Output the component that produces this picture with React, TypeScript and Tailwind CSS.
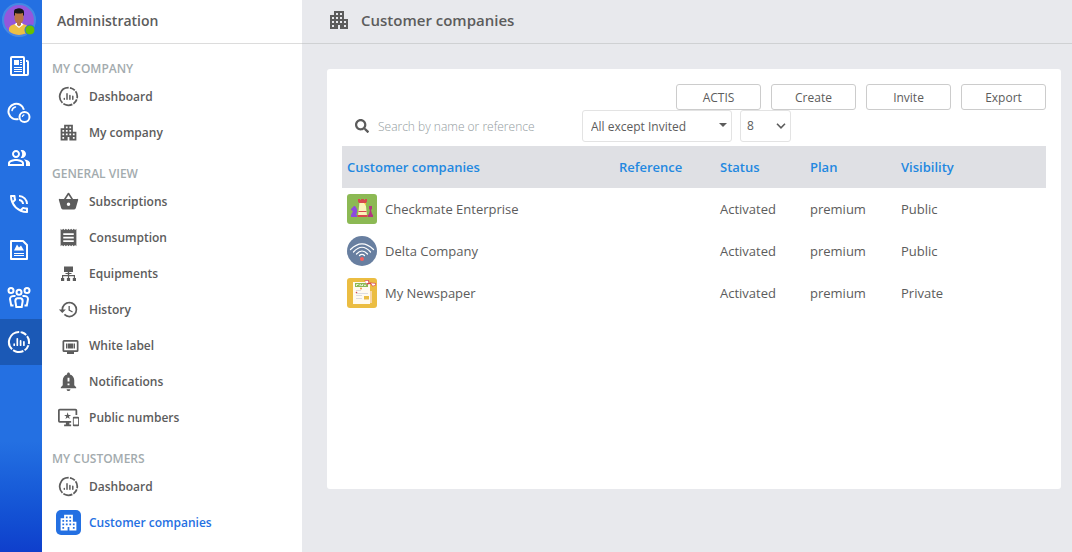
import type { ReactNode } from "react";
import {
  MdHistory,
  MdImportantDevices,
  MdNotificationImportant,
  MdOutlinePeopleAlt,
  MdOutlinePhoneInTalk,
} from "react-icons/md";
import { FaSearch } from "react-icons/fa";

type IconProps = { className?: string };

type NavEntry = { label: string; icon: ReactNode; active?: boolean };
type NavSection = { title: string; entries: NavEntry[] };

type Company = {
  name: string;
  logo: ReactNode;
  reference: string;
  status: string;
  plan: string;
  visibility: string;
};

function StatsIcon({ className }: IconProps) {
  return (
    <svg viewBox="0 0 24 24" fill="none" stroke="currentColor" className={className}>
      <circle
        cx="12"
        cy="12"
        r="10"
        strokeWidth="2"
        pathLength="360"
        strokeDasharray="37 8 62 8 137 8 37 8 47 8"
        transform="rotate(19 12 12)"
      />
      <path
        strokeWidth="1.7"
        strokeLinecap="round"
        d="M7.200 15.200v-1M10.300 15.200V8.800M13.600 15.200v-4.400M16.900 15.200v-3.400"
      />
    </svg>
  );
}

function BuildingIcon({ className }: IconProps) {
  return (
    <svg viewBox="0 0 24 24" fill="currentColor" className={className}>
      <path
        fillRule="evenodd"
        d="M3 7h4V3h10v8h4v10h-8v-4h-2v4H3zM5 9v2h2V9zM5 13v2h2v-2zM5 17v2h2v-2zM9 5v2h2V5zM13 5v2h2V5zM9 9v2h2V9zM13 9v2h2V9zM9 13v2h2v-2zM13 13v2h2v-2zM17 13v2h2v-2zM17 17v2h2v-2z"
      />
    </svg>
  );
}

function BasketIcon({ className }: IconProps) {
  return (
    <svg viewBox="0 0 24 24" fill="currentColor" className={className}>
      <path
        fillRule="evenodd"
        d="M17.200 9l-4.400-6.600a1 1 0 0 0-1.600 0L6.800 9H2a1 1 0 0 0-1 1.300l2.600 9.200A2 2 0 0 0 5.500 21h13a2 2 0 0 0 1.900-1.500L23 10.300A1 1 0 0 0 22 9zM9 9l3-4.400L15 9zM12 17a2 2 0 1 1 0-4 2 2 0 0 1 0 4z"
      />
    </svg>
  );
}

function ReceiptIcon({ className }: IconProps) {
  return (
    <svg viewBox="0 0 24 24" fill="currentColor" className={className}>
      <path
        fillRule="evenodd"
        d="M3 2l1.500 1.500L6 2l1.500 1.500L9 2l1.500 1.500L12 2l1.500 1.500L15 2l1.500 1.500L18 2l1.500 1.500L21 2v20l-1.500-1.500L18 22l-1.500-1.500L15 22l-1.500-1.500L12 22l-1.500-1.500L9 22l-1.500-1.500L6 22l-1.500-1.500L3 22zM6 7v2h12V7zM6 11v2h12v-2zM6 15v2h12v-2z"
      />
    </svg>
  );
}

function NewsIcon({ className }: IconProps) {
  return (
    <svg viewBox="0 0 20 20" fill="none" stroke="currentColor" className={className}>
      <rect x="2" y="1" width="13" height="18" rx="1" strokeWidth="2" />
      <path strokeWidth="2" d="M15 5h3a1 1 0 0 1 1 1v12a1 1 0 0 1-1 1h-4" />
      <path stroke="#2470e2" d="M16.500 4v14" />
      <path fill="currentColor" stroke="none" d="M5 4h5v5H5z" />
      <path d="M11 4.500h2M11 6.500h2M11 8.500h2M5 11.500h8M5 13.500h8M5 15.500h8" />
    </svg>
  );
}

function BubblesIcon({ className }: IconProps) {
  return (
    <svg viewBox="0 0 24 24" fill="none" stroke="currentColor" strokeWidth="2" className={className}>
      <path d="M16.900 9.800A7.800 7.800 0 1 0 11.500 19" />
      <path strokeWidth="1.5" strokeLinecap="round" d="M5 10.500a4.500 4.500 0 0 1 3.500-3.500" />
      <circle cx="17.500" cy="17" r="5" />
      <path strokeWidth="1.2" strokeLinecap="round" d="M15.400 16.500a2.300 2.300 0 0 1 1.600-1.600" />
    </svg>
  );
}

function PictureDocIcon({ className }: IconProps) {
  return (
    <svg viewBox="0 0 20 20" fill="none" stroke="currentColor" className={className}>
      <path strokeWidth="2" strokeLinejoin="round" d="M2 1h12l4 4v14H2z" />
      <path fill="currentColor" stroke="none" d="M5 10.500l3-6 2 3 2-2 3 5z" />
      <path d="M5 13.500h10M5 15.500h10" />
    </svg>
  );
}

function CrowdIcon({ className }: IconProps) {
  return (
    <svg viewBox="0 0 24 24" fill="none" stroke="currentColor" strokeWidth="2" className={className}>
      <circle cx="4" cy="6.500" r="2.500" />
      <circle cx="20" cy="6.500" r="2.500" />
      <circle cx="12" cy="8.300" r="2.500" />
      <path d="M12 14c-2.500 0-3.700 1-3.700 3l1 6h5.400l1-6c0-2-1.200-3-3.700-3z" />
      <path d="M8.500 12C4.800 11.500 3 12.800 3 15l1.200 6.500H6.500M15.500 12c3.700-.5 5.500.8 5.500 3l-1.200 6.500h-2.300" />
    </svg>
  );
}

function NetworkIcon({ className }: IconProps) {
  return (
    <svg viewBox="0 0 21 21" fill="currentColor" className={className}>
      <path d="M6 3.500h9V9H6zM9.800 9h1.400v3H9.800zM7.500 10h6v1h-6zM4 12h13v1.200H4zM4 12h1.200v3H4zM9.900 12h1.200v3H9.900zM15.800 12H17v3h-1.200z" />
      <path d="M3 15h3.200v3H3zM8.900 15h3.200v3H8.900zM14.800 15H18v3h-3.200z" />
    </svg>
  );
}

function ScreenIcon({ className }: IconProps) {
  return (
    <svg viewBox="0 0 21 21" fill="currentColor" className={className}>
      <path
        fillRule="evenodd"
        d="M6 5h13a1.500 1.500 0 0 1 1.500 1.500v9A1.500 1.500 0 0 1 19 17h-3v2H9v-2H6a1.500 1.500 0 0 1-1.500-1.500v-9A1.500 1.500 0 0 1 6 5zM6.200 6.700v8.600h12.600V6.700z"
      />
      <path d="M8 8.500h1v5H8zM9.500 8.500h6v5h-6zM16 8.500h1v5h-1z" />
    </svg>
  );
}

function Avatar() {
  return (
    <svg viewBox="0 0 34 34" className="size-[34px]" role="img" aria-label="Profile">
      <defs>
        <clipPath id="face">
          <circle cx="17" cy="17" r="15" />
        </clipPath>
      </defs>
      <circle cx="17" cy="17" r="16" fill="#9457dc" stroke="#4689e3" strokeWidth="2" />
      <g clipPath="url(#face)">
        <path fill="#ecc044" d="M7 34V25q1-3 6-4h8q5 1 6 4v9z" />
        <path fill="#fff" d="M12.500 21.500l4.500 3.500 4.500-3.500-1.500-1.500h-6z" />
        <path fill="#b87543" d="M12.500 8h9v8q-.5 3-2.500 4v2L17 23.500 15 22v-2q-2-1-2.500-4z" />
        <path fill="#161616" d="M12 12.500V9q0-3 2-3 3-1.500 6 0 2 1 2 3v3.500h-1V10q-4 1-8 0v2.500z" />
      </g>
      <circle cx="28" cy="27" r="5" fill="#68c000" stroke="#2470e2" strokeWidth="1" />
    </svg>
  );
}

function ChessLogo() {
  return (
    <svg viewBox="0 0 30 30" className="size-[30px]">
      <rect width="30" height="30" rx="3" fill="#8cb954" />
      <path fill="#fbf3bb" d="M12.500 8h6l1.500 13.500h-9z" />
      <path fill="#d8484d" d="M11 5h2v1h1V5h3v1h1V5h2v2.500l-1 1.500h-7l-1-1.500zM11.500 17h8v1h-8zM10.500 21h10v2h-10z" />
      <path fill="#f6c73c" d="M17 9h2v3z" />
      <path fill="#8d4ade" d="M4 15l3-3h1l2 3v3l-1 3h1v2H4v-2l2-4-2-1z" />
      <path fill="#b33482" d="M22 12h3v3l-1 1 1 4 1 1v2h-5v-2l1-1 1-4-1-1z" />
    </svg>
  );
}

function WifiLogo() {
  return (
    <svg viewBox="0 0 30 30" fill="none" stroke="#fff" strokeLinecap="round" className="size-[30px]">
      <circle cx="15" cy="15" r="15" fill="#687fa0" stroke="none" />
      <path
        strokeWidth="1.200"
        d="M3.500 13.500Q15 2 26.500 13.500M6.500 16Q15 6.500 23.500 16M9.500 18Q15 12 20.500 18M12.500 19.500Q15 17 17.500 19.500"
      />
      <circle cx="15" cy="23" r="2" fill="#f9605f" stroke="none" />
    </svg>
  );
}

function NewspaperLogo() {
  return (
    <svg viewBox="0 0 30 30" className="size-[30px]">
      <rect width="30" height="30" rx="3" fill="#ebbd42" />
      <path fill="#f7d5a5" d="M22 13h3v12h-3z" />
      <path fill="#fffaf0" d="M6 4h17v22H6z" />
      <path fill="#8cb954" d="M8 5h13v4H8z" />
      <path
        stroke="#fff"
        fill="none"
        strokeWidth="0.8"
        d="M9.500 8V6.500h2M13 8V6.500l1.500 1 1-1V8M17 6.500l1 1.500 1-1.500"
      />
      <path stroke="#dcdce0" fill="none" d="M9 12.500h5M9 15.500h12M9 17.500h6M9 20.500h6" />
      <path fill="#ebbd42" d="M17 18h5v3.500h-5z" />
      <circle cx="14" cy="10.500" r="1" fill="#f0923c" />
      <circle cx="9.500" cy="14.500" r="0.800" fill="#d8484d" />
      <path fill="#d8484d" d="M17.500 2h4l1 2.500 6.500.5-.5 2.500-3 1-2-2.500-4 .5z" />
      <path fill="#fff" d="M18 2.800h3l.5 2-2.500.7zM24 5.300l4.500.4-.8 1.600-2 .4z" />
    </svg>
  );
}

const railItems = [
  { label: "News", icon: <NewsIcon className="size-5" /> },
  { label: "Bubbles", icon: <BubblesIcon className="size-6" /> },
  { label: "Contacts", icon: <MdOutlinePeopleAlt className="size-6" /> },
  { label: "Calls", icon: <MdOutlinePhoneInTalk className="size-6" /> },
  { label: "Files", icon: <PictureDocIcon className="size-5" /> },
  { label: "Groups", icon: <CrowdIcon className="size-6" /> },
  { label: "Administration", icon: <StatsIcon className="size-6" />, active: true },
];

const sections: NavSection[] = [
  {
    title: "MY COMPANY",
    entries: [
      { label: "Dashboard", icon: <StatsIcon className="size-[21px]" /> },
      { label: "My company", icon: <BuildingIcon className="size-[21px]" /> },
    ],
  },
  {
    title: "GENERAL VIEW",
    entries: [
      { label: "Subscriptions", icon: <BasketIcon className="size-[21px]" /> },
      { label: "Consumption", icon: <ReceiptIcon className="size-[21px]" /> },
      { label: "Equipments", icon: <NetworkIcon className="size-[21px]" /> },
      { label: "History", icon: <MdHistory className="size-[21px]" /> },
      { label: "White label", icon: <ScreenIcon className="size-[21px]" /> },
      { label: "Notifications", icon: <MdNotificationImportant className="size-[23px]" /> },
      { label: "Public numbers", icon: <MdImportantDevices className="size-[21px]" /> },
    ],
  },
  {
    title: "MY CUSTOMERS",
    entries: [
      { label: "Dashboard", icon: <StatsIcon className="size-[21px]" /> },
      { label: "Customer companies", icon: <BuildingIcon className="size-[21px]" />, active: true },
    ],
  },
];

const actions = ["ACTIS", "Create", "Invite", "Export"];

const columns = [
  { label: "Customer companies", width: "w-[272px]" },
  { label: "Reference", width: "w-[101px]" },
  { label: "Status", width: "w-[90px]" },
  { label: "Plan", width: "w-[91px]" },
  { label: "Visibility", width: "" },
];

const companies: Company[] = [
  {
    name: "Checkmate Enterprise",
    logo: <ChessLogo />,
    reference: "",
    status: "Activated",
    plan: "premium",
    visibility: "Public",
  },
  {
    name: "Delta Company",
    logo: <WifiLogo />,
    reference: "",
    status: "Activated",
    plan: "premium",
    visibility: "Public",
  },
  {
    name: "My Newspaper",
    logo: <NewspaperLogo />,
    reference: "",
    status: "Activated",
    plan: "premium",
    visibility: "Private",
  },
];

const selectCls =
  "h-8 w-full appearance-none rounded-[3px] border border-[#e3e3e3] bg-white text-xs outline-none";

const cellCls = "px-[5px] pt-0.5";

function Rail() {
  return (
    <nav className="flex w-[42px] shrink-0 flex-col bg-linear-to-b from-[#2470e2] from-80% to-[#0f3fcc]">
      <div className="flex h-[43px] items-start justify-center pt-[3px] pr-1">
        <Avatar />
      </div>
      {railItems.map((item) => (
        <button
          key={item.label}
          type="button"
          aria-label={item.label}
          className={`flex h-[46px] items-center justify-center pr-1 text-white ${item.active ? "bg-[#1b59b6]" : ""}`}
        >
          {item.icon}
        </button>
      ))}
    </nav>
  );
}

function Sidebar() {
  return (
    <aside className="w-[260px] shrink-0 bg-white">
      <h1 className="flex h-11 items-center border-b border-[#dcdcdc] px-[15px] pb-0.5 text-sm font-semibold">
        Administration
      </h1>
      <div className="flex flex-col gap-[13px] pt-[15px]">
        {sections.map((section) => (
          <section key={section.title}>
            <h2 className="px-2.5 text-xs leading-5 font-semibold text-[#a3abae]">
              {section.title}
            </h2>
            {section.entries.map((entry) => (
              <a
                key={entry.label}
                href="#"
                className={`flex h-9 items-center gap-2 pb-px pl-3.5 text-xs font-semibold ${entry.active ? "text-[#2470e2]" : ""}`}
              >
                <span
                  className={`flex size-[25px] items-center justify-center rounded-[5px] ${entry.active ? "bg-[#2470e2] text-white" : ""}`}
                >
                  {entry.icon}
                </span>
                {entry.label}
              </a>
            ))}
          </section>
        ))}
      </div>
    </aside>
  );
}

function Filters() {
  return (
    <div className="flex items-center gap-2 pl-[13px]">
      <label className="flex w-[219px] items-center gap-[9px]">
        <FaSearch className="size-3.5 shrink-0" />
        <input
          type="text"
          aria-label="Search"
          placeholder="Search by name or reference"
          className="w-full pt-0.5 text-xs font-light outline-none placeholder:text-[#929b9e]"
        />
      </label>
      <div className="relative w-[150px]">
        <select aria-label="Status filter" className={`${selectCls} pt-0.5 pl-2`}>
          <option>All except Invited</option>
        </select>
        <svg
          viewBox="0 0 8 4"
          fill="currentColor"
          className="pointer-events-none absolute top-[13px] right-[5px] h-1 w-2"
        >
          <path d="M0 0h8L4 4z" />
        </svg>
      </div>
      <div className="relative w-[51px]">
        <select aria-label="Rows per page" className={`${selectCls} pl-1.5`}>
          <option>8</option>
        </select>
        <svg
          viewBox="0 0 10 6"
          fill="none"
          stroke="currentColor"
          strokeWidth="1.6"
          className="pointer-events-none absolute top-[13px] right-[5px] h-1.5 w-2.5"
        >
          <path d="M1 .8l4 4 4-4" />
        </svg>
      </div>
    </div>
  );
}

function CompanyTable() {
  return (
    <table className="mt-1 w-full table-fixed text-left text-[13px]">
      <thead className="bg-[#dfe0e4] text-[#2388e0]">
        <tr className="h-[42px]">
          {columns.map((col) => (
            <th key={col.label} className={`${cellCls} font-semibold ${col.width}`}>
              {col.label}
            </th>
          ))}
        </tr>
      </thead>
      <tbody>
        {companies.map((company) => (
          <tr key={company.name} className="h-[42px]">
            <td className="px-[5px]">
              <div className="flex items-center gap-2">
                {company.logo}
                <span className="pt-0.5">{company.name}</span>
              </div>
            </td>
            <td className={cellCls}>{company.reference}</td>
            <td className={cellCls}>{company.status}</td>
            <td className={cellCls}>{company.plan}</td>
            <td className={cellCls}>{company.visibility}</td>
          </tr>
        ))}
      </tbody>
    </table>
  );
}

export default function App() {
  return (
    <div className="flex min-h-screen bg-[#e8e9ed] font-['Open_Sans',sans-serif] text-[#5c5c5c]">
      <Rail />
      <Sidebar />
      <main className="min-w-0 flex-1">
        <header className="flex h-11 items-center gap-2.5 border-b border-[#cfd1d3] px-[25px] pb-[3px]">
          <BuildingIcon className="size-6" />
          <h1 className="text-[15px] font-semibold">Customer companies</h1>
        </header>
        <div className="mt-[25px] mr-[11px] ml-[25px] min-h-[420px] rounded-[3px] bg-white p-[15px]">
          <div className="flex justify-end gap-2.5">
            {actions.map((action) => (
              <button
                key={action}
                type="button"
                className="h-[26px] w-[85px] rounded-[3px] border border-[#cccccc] bg-white pt-0.5 text-xs"
              >
                {action}
              </button>
            ))}
          </div>
          <Filters />
          <CompanyTable />
        </div>
      </main>
    </div>
  );
}
